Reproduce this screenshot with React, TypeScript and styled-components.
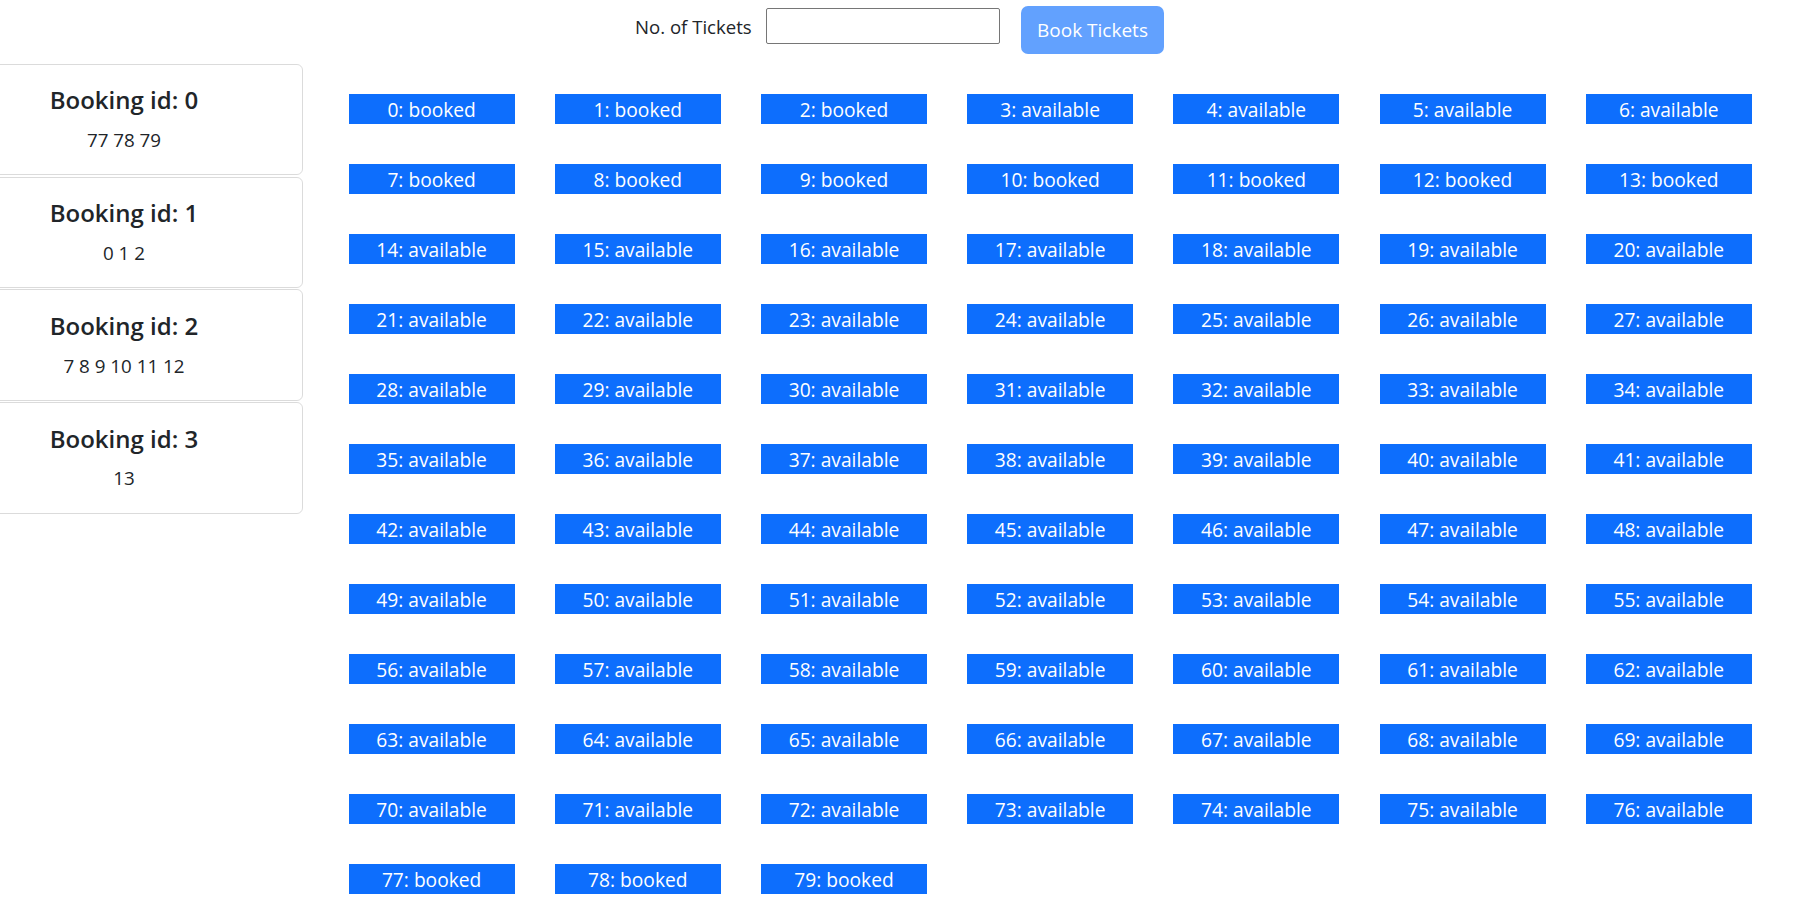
import React from "react";
import styled, { createGlobalStyle } from "styled-components";

const GlobalStyle = createGlobalStyle`
  html, body { margin: 0; padding: 0; background: #fff; }
  body {
    font-family: "Open Sans", "Noto Sans", "Liberation Sans", sans-serif;
    font-size: 19.2px;
    line-height: 1.5;
    color: #212529;
  }
  * { box-sizing: border-box; }
`;

const Header = styled.div`
  display: flex;
  justify-content: center;
  align-items: flex-start;
  height: 60px;
  padding-right: 11px;
`;

const Label = styled.label`
  margin-top: 13px;
  font-size: 18.6px;
  line-height: 28.8px;
  white-space: nowrap;
  width: 118px;
  margin-right: 13px;
`;

const Input = styled.input`
  margin-top: 8px;
  width: 234px;
  height: 36px;
  border: 1px solid #767676;
  border-radius: 2px;
  padding: 1px 2px;
  font: inherit;
  margin-right: 21px;
  background: #fff;
`;

const BookButton = styled.button`
  margin-top: 6px;
  width: 143px;
  height: 48px;
  padding: 0;
  border: 1px solid transparent;
  border-radius: 7px;
  background: rgb(98, 161, 254);
  color: #fff;
  font-family: inherit;
  font-size: 19px;
  line-height: 28.8px;
  white-space: nowrap;
  cursor: default;
`;

const Body = styled.div`
  display: flex;
  align-items: flex-start;
`;

const Sidebar = styled.div`
  margin-left: -55px;
  width: 358px;
  margin-top: 4px;
  display: flex;
  flex-direction: column;
  gap: 1.25px;
  flex-shrink: 0;
`;

const Card = styled.div`
  border: 1px solid rgba(0, 0, 0, 0.14);
  border-radius: 6px;
  padding: 21.3px 16px 19.6px;
  text-align: center;
`;

const CardTitle = styled.h5`
  margin: 0 0 11px;
  font-size: 24px;
  font-weight: 600;
  line-height: 28.8px;
`;

const CardText = styled.p`
  margin: 0;
  font-size: 18.8px;
  line-height: 28.8px;
`;

const SeatGrid = styled.div`
  display: grid;
  grid-template-columns: repeat(7, 166px);
  column-gap: 40.2px;
  row-gap: 40px;
  padding-left: 45.6px;
  padding-top: 34px;
`;

const Seat = styled.div`
  height: 30px;
  background: #0d6efd;
  color: #fff;
  text-align: center;
  font-size: 19.2px;
  line-height: 31px;
  white-space: nowrap;
`;

const bookings: number[][] = [
  [77, 78, 79],
  [0, 1, 2],
  [7, 8, 9, 10, 11, 12],
  [13],
];

const booked = new Set(bookings.flat());

export default function App() {
  return (
    <>
      <GlobalStyle />
      <Header>
        <Label>No. of Tickets</Label>
        <Input type="text" />
        <BookButton disabled>Book Tickets</BookButton>
      </Header>
      <Body>
        <Sidebar>
          {bookings.map((b, i) => (
            <Card key={i}>
              <CardTitle>Booking id: {i}</CardTitle>
              <CardText>{b.join(" ")}</CardText>
            </Card>
          ))}
        </Sidebar>
        <SeatGrid>
          {Array.from({ length: 80 }, (_, i) => (
            <Seat key={i}>
              {i}: {booked.has(i) ? "booked" : "available"}
            </Seat>
          ))}
        </SeatGrid>
      </Body>
    </>
  );
}
